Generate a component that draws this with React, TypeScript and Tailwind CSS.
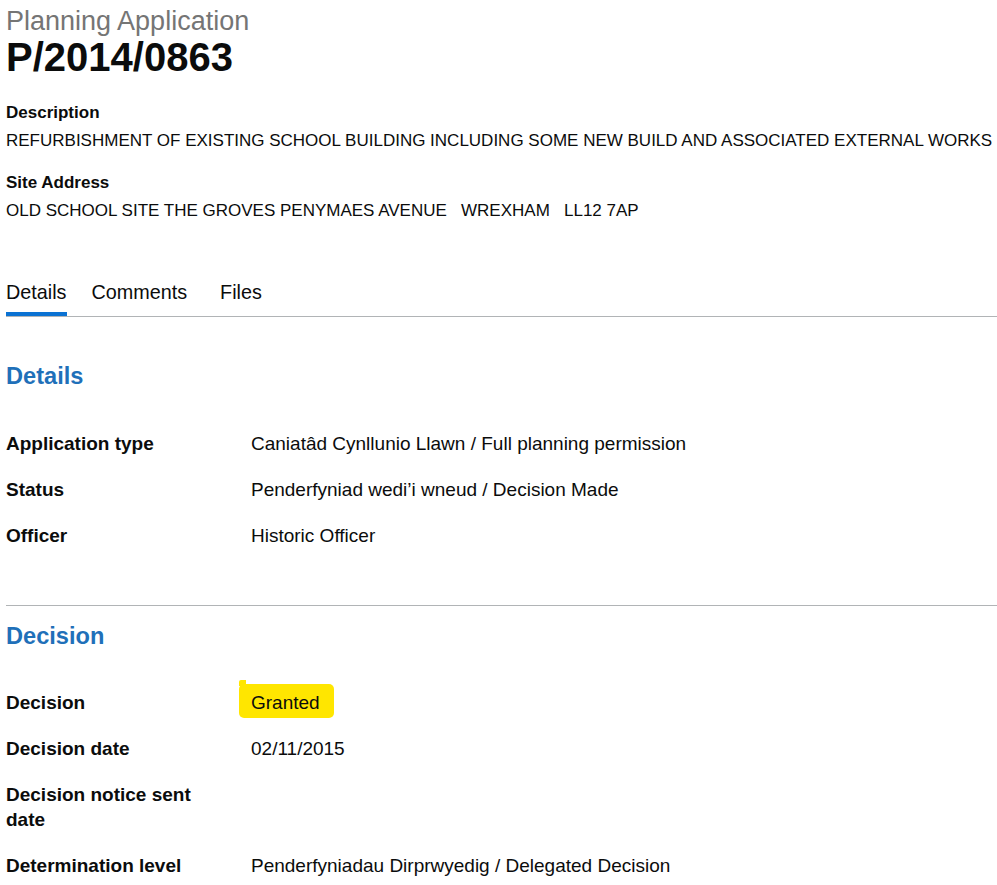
import React from "react";

const DETAILS = [
  { label: "Application type", value: "Caniatâd Cynllunio Llawn / Full planning permission" },
  { label: "Status", value: "Penderfyniad wedi’i wneud / Decision Made" },
  { label: "Officer", value: "Historic Officer" },
];

const TABS = ["Details", "Comments", "Files"];

function Row({ label, children }: { label: string; children?: React.ReactNode }) {
  return (
    <>
      <div className="font-bold">{label}</div>
      <div>{children}</div>
    </>
  );
}

export default function App() {
  return (
    <div className="min-h-screen bg-white pl-[6px] pt-[5px] pb-10 font-['Liberation_Sans',Arial,sans-serif] text-[#0b0c0c]">
      <p className="text-[27px] leading-[32px] text-[#757575]">Planning Application</p>
      <h1 className="text-[40px] leading-[40px] font-bold">P/2014/0863</h1>

      <div className="mt-[23px] text-[17px] leading-[25px]">
        <p className="font-bold">Description</p>
        <p className="mt-[3px]">
          REFURBISHMENT OF EXISTING SCHOOL BUILDING INCLUDING SOME NEW BUILD AND ASSOCIATED EXTERNAL WORKS
        </p>
        <p className="mt-[17px] font-bold">Site Address</p>
        <p className="mt-[3px] whitespace-pre">
          OLD SCHOOL SITE THE GROVES PENYMAES AVENUE   WREXHAM   LL12 7AP
        </p>
      </div>

      {/* tabs */}
      <div className="mt-[57px] flex border-b border-[#b1b4b6] text-[19.8px] leading-[25px]">
        {TABS.map((tab, i) => (
          <div
            key={tab}
            className={`pb-[7px] border-b-4 ${
              i === 0 ? "border-[#0b72d3] pr-px" : "border-transparent"
            } ${i === 1 ? "ml-[24px]" : ""} ${i === 2 ? "ml-[33px]" : ""}`}
          >
            {tab}
          </div>
        ))}
      </div>

      <h2 className="mt-[44px] text-[23.6px] leading-[30px] font-bold text-[#1f70b9]">Details</h2>
      <div className="mt-[40px] grid grid-cols-[220px_1fr] gap-x-[25px] gap-y-[21px] text-[19px] leading-[25px]">
        {DETAILS.map((d) => (
          <Row key={d.label} label={d.label}>
            {d.value}
          </Row>
        ))}
      </div>

      <div className="mt-[57px] h-px bg-[#b1b4b6]" />

      <h2 className="mt-[15px] text-[23.6px] leading-[30px] font-bold text-[#1f70b9]">Decision</h2>
      <div className="mt-[39px] grid grid-cols-[220px_1fr] gap-x-[25px] gap-y-[21px] text-[19px] leading-[25px]">
        <Row label="Decision">
          <span className="relative inline-block">
            <span className="absolute -left-[12px] -right-[14px] -top-[6px] -bottom-[3px] rounded-[5px] bg-[#ffe600]" />
            <span className="absolute -left-[12px] -top-[10px] h-[6px] w-[7px] rounded-tl-[2px] bg-[#ffe600]" />
            <span className="relative">Granted</span>
          </span>
        </Row>
        <Row label="Decision date">02/11/2015</Row>
        <Row label="Decision notice sent date" />
        <Row label="Determination level">Penderfyniadau Dirprwyedig / Delegated Decision</Row>
      </div>
    </div>
  );
}
